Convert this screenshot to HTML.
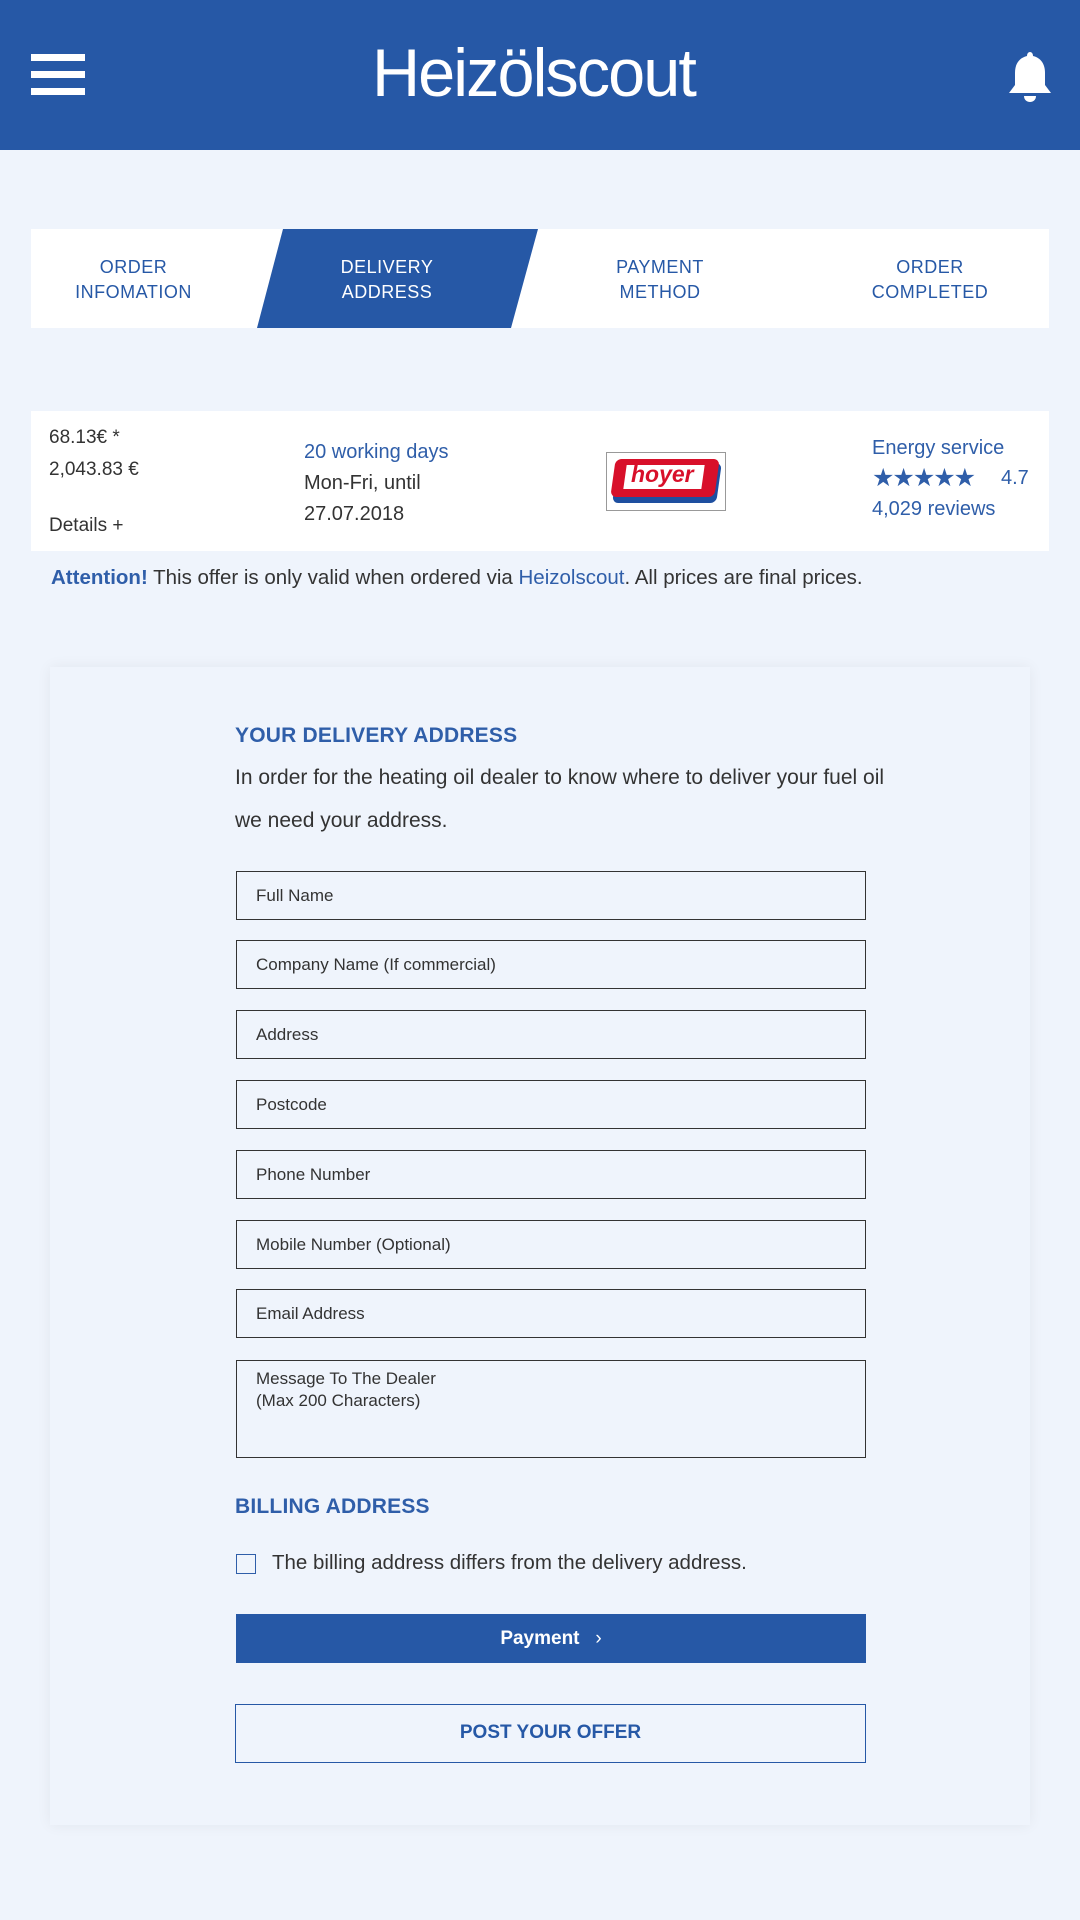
<!DOCTYPE html>
<html><head><meta charset="utf-8"><style>
*{margin:0;padding:0;box-sizing:border-box}
body{width:1080px;height:1920px;background:#eff4fc;font-family:"Liberation Sans",sans-serif;color:#333;position:relative;overflow:hidden}
.a{position:absolute}
.hdr{left:0;top:0;width:1080px;height:150px;background:#2658a6}
.bar{left:31px;width:54px;height:7px;background:#fff}
.steps{left:31px;top:229px;width:1018px;height:99px;background:#fff}
.st{position:absolute;top:26px;text-align:center;font-size:18px;line-height:25px;color:#2658a6;letter-spacing:.5px}
.card{left:31px;top:411px;width:1018px;height:140px;background:#fff}
.blue{color:#2f5ea9}
.fc{left:50px;top:667px;width:980px;height:1158px;background:#eff4fc;box-shadow:0 0 14px rgba(0,0,0,.06)}
.inp{position:absolute;left:236px;width:630px;height:49px;border:1.3px solid #333;font-size:17px;padding:14px 0 0 19px;color:#333}
h2{position:absolute;left:235px;font-size:21px;color:#2f5ea9;font-weight:bold;letter-spacing:.2px}
</style></head><body>
<div class="a hdr"></div>
<div class="a bar" style="top:54px"></div><div class="a bar" style="top:71px"></div><div class="a bar" style="top:88px"></div>
<div class="a" style="left:372px;top:34px;color:#fff;font-size:68px;letter-spacing:-2px;transform:scaleX(.98);transform-origin:left top">Heizölscout</div>
<svg class="a" style="left:1005px;top:50px" width="50" height="52" viewBox="0 0 50 52"><path d="M25 2c-2 0-3 2-3 4-8 2-12 8-12 17v12l-6 8h42l-6-8V23c0-9-4-15-12-17 0-2-1-4-3-4z" fill="#fff"/><path d="M19 46h12c0 4-3 6-6 6s-6-2-6-6z" fill="#fff"/></svg>
<div class="a steps"></div>
<svg class="a" style="left:257px;top:229px" width="282" height="99"><polygon points="26,0 281,0 254,99 0,99" fill="#2658a6"/></svg>
<div class="st" style="left:31px;top:255px;width:205px">ORDER<br>INFOMATION</div>
<div class="st" style="left:287px;top:255px;width:200px;color:#fff">DELIVERY<br>ADDRESS</div>
<div class="st" style="left:560px;top:255px;width:200px">PAYMENT<br>METHOD</div>
<div class="st" style="left:830px;top:255px;width:200px">ORDER<br>COMPLETED</div>
<div class="a card"></div>
<div class="a" style="left:49px;top:422px;font-size:19px;line-height:32px">68.13€ *<br>2,043.83 €</div>
<div class="a" style="left:49px;top:515px;font-size:19px">Details +</div>
<div class="a" style="left:304px;top:437px;font-size:20px;line-height:31px"><span class="blue">20 working days</span><br>Mon-Fri, until<br>27.07.2018</div>
<div class="a" style="left:606px;top:452px;width:120px;height:59px;border:1px solid #999;background:#fff">
<div class="a" style="left:8px;top:10px;width:104px;height:40px;background:#1e4fa0;border-radius:6px;transform:skewX(-8deg)"></div>
<div class="a" style="left:6px;top:6px;width:104px;height:38px;background:#d8102a;border-radius:6px;transform:skewX(-8deg)"></div>
<div class="a" style="left:18px;top:12px;width:78px;height:24px;background:#fff;transform:skewX(-8deg)"></div>
<div class="a" style="left:24px;top:8px;font-size:23px;font-weight:bold;font-style:italic;color:#d8102a">hoyer</div></div>
<div class="a blue" style="left:872px;top:437px;font-size:20px">Energy service</div>
<div class="a blue" style="left:872px;top:463px;font-size:25px;letter-spacing:-2px">★★★★★</div>
<div class="a blue" style="left:1001px;top:467px;font-size:20px">4.7</div>
<div class="a blue" style="left:872px;top:498px;font-size:20px">4,029 reviews</div>
<div class="a" style="left:51px;top:566px;font-size:20.5px"><b class="blue">Attention!</b> This offer is only valid when ordered via <span class="blue">Heizolscout</span>. All prices are final prices.</div>
<div class="a fc"></div>
<h2 style="top:724px">YOUR DELIVERY ADDRESS</h2>
<div class="a" style="left:235px;top:756px;font-size:21px;line-height:43px">In order for the heating oil dealer to know where to deliver your fuel oil<br>we need your address.</div>
<div class="inp" style="top:871px">Full Name</div>
<div class="inp" style="top:940px">Company Name (If commercial)</div>
<div class="inp" style="top:1010px">Address</div>
<div class="inp" style="top:1080px">Postcode</div>
<div class="inp" style="top:1150px">Phone Number</div>
<div class="inp" style="top:1220px">Mobile Number (Optional)</div>
<div class="inp" style="top:1289px">Email Address</div>
<div class="inp" style="top:1360px;height:98px;padding-top:7px;line-height:22px">Message To The Dealer<br>(Max 200 Characters)</div>
<h2 style="top:1495px">BILLING ADDRESS</h2>
<div class="a" style="left:236px;top:1554px;width:20px;height:20px;border:1.5px solid #2f5ea9"></div>
<div class="a" style="left:272px;top:1551px;font-size:20.5px">The billing address differs from the delivery address.</div>
<div class="a" style="left:236px;top:1614px;width:630px;height:49px;background:#2658a6;color:#fff;font-size:19px;font-weight:bold;text-align:center;line-height:49px">Payment &nbsp;&nbsp;<span style="font-weight:normal">›</span></div>
<div class="a" style="left:235px;top:1704px;width:631px;height:59px;border:1.5px solid #2658a6;color:#2658a6;font-size:19px;font-weight:bold;text-align:center;line-height:56px">POST YOUR OFFER</div>
</body></html>
